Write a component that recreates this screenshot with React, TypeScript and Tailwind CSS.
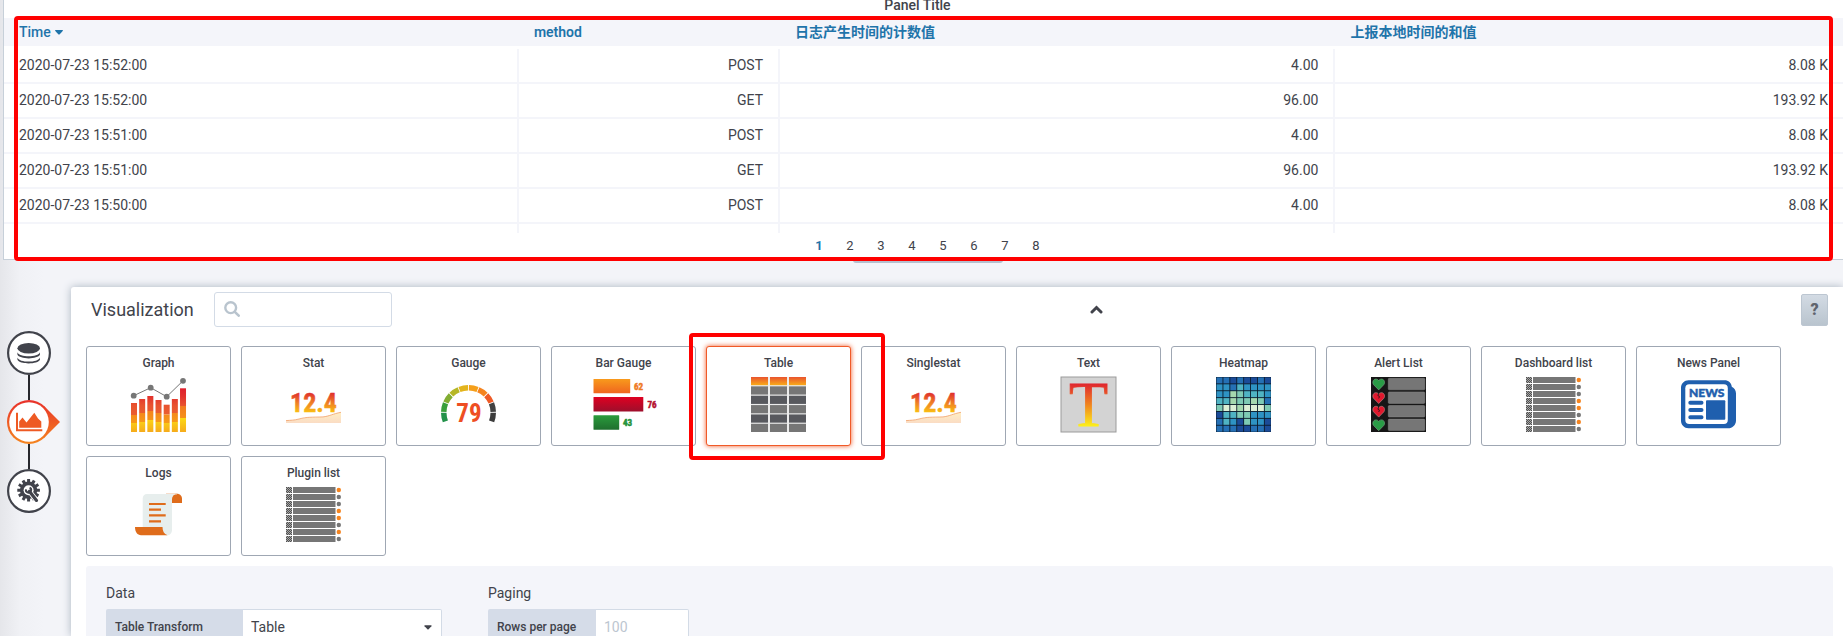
import React from 'react';

type Row = [string, string, string, string];

const rows: Row[] = [
  ['2020-07-23 15:52:00', 'POST', '4.00', '8.08 K'],
  ['2020-07-23 15:52:00', 'GET', '96.00', '193.92 K'],
  ['2020-07-23 15:51:00', 'POST', '4.00', '8.08 K'],
  ['2020-07-23 15:51:00', 'GET', '96.00', '193.92 K'],
  ['2020-07-23 15:50:00', 'POST', '4.00', '8.08 K'],
];

const NARROW = '"Liberation Sans Narrow", "Roboto Condensed", Roboto, sans-serif';

function Icon({ children }: { children: React.ReactNode }) {
  return (
    <svg viewBox="0 0 55 55" className="size-[55px] overflow-visible" aria-hidden="true">
      {children}
    </svg>
  );
}

const graphBars = [
  [26, 38, 46],
  [22, 36, 45],
  [19, 34, 43],
  [23, 36, 45],
  [27.7, 37.5, 46],
  [22, 36, 45],
  [11.3, 29, 41],
];

function GraphIcon() {
  return (
    <Icon>
      <defs>
        <linearGradient id="g-red" x1="0" y1="11" x2="0" y2="38" gradientUnits="userSpaceOnUse">
          <stop offset="0" stopColor="#df1f2d" />
          <stop offset="0.3" stopColor="#e2312d" />
          <stop offset="0.65" stopColor="#e8532f" />
          <stop offset="1" stopColor="#ea5f2f" />
        </linearGradient>
        <linearGradient id="g-orange" x1="0" y1="29" x2="0" y2="46" gradientUnits="userSpaceOnUse">
          <stop offset="0" stopColor="#f27b20" />
          <stop offset="1" stopColor="#f79a17" />
        </linearGradient>
        <linearGradient id="g-yellow" x1="0" y1="41" x2="0" y2="55" gradientUnits="userSpaceOnUse">
          <stop offset="0" stopColor="#fbd914" />
          <stop offset="1" stopColor="#f6ab1b" />
        </linearGradient>
      </defs>
      {graphBars.map(([a, b, c], i) => (
        <g key={i}>
          <rect x={i * 8.17} y={a} width="6" height={b - a} fill="url(#g-red)" />
          <rect x={i * 8.17} y={b} width="6" height={c - b} fill="url(#g-orange)" />
          <rect x={i * 8.17} y={c} width="6" height={55 - c} fill="url(#g-yellow)" />
        </g>
      ))}
      <path d="M2.7 18.7 19.7 10.7 35.7 19.7 52 3.8" fill="none" stroke="#767676" strokeWidth="1" />
      {[[2.7, 18.7], [19.7, 10.7], [35.7, 19.7], [52, 3.8]].map(([x, y]) => (
        <circle key={x} cx={x} cy={y} r="2.9" fill="#767676" />
      ))}
    </Icon>
  );
}

function StatIcon({ id }: { id: string }) {
  return (
    <Icon>
      <defs>
        <linearGradient id={id} x1="0" y1="16" x2="0" y2="36" gradientUnits="userSpaceOnUse">
          <stop offset="0" stopColor="#df2f2d" />
          <stop offset="0.5" stopColor="#ef7f25" />
          <stop offset="1" stopColor="#fbc410" />
        </linearGradient>
        <linearGradient id={id + 'a'} x1="0" y1="35" x2="0" y2="46" gradientUnits="userSpaceOnUse">
          <stop offset="0" stopColor="#fff0c4" />
          <stop offset="1" stopColor="#fadcc4" />
        </linearGradient>
      </defs>
      <path d="M0 43.6C5 43.2 8 43.3 13 42 21 39.8 26 40.3 37 39.9 43 39.3 47 36.8 55 35.3V46H0Z" fill={`url(#${id}a)`} />
      <path d="M0 43.6C5 43.2 8 43.3 13 42 21 39.8 26 40.3 37 39.9 43 39.3 47 36.8 55 35.3" fill="none" stroke="#f0a06a" strokeWidth="0.8" />
      <text x="27.5" y="35" textAnchor="middle" fontFamily={NARROW} fontWeight="700" fontSize="26" fill={`url(#${id})`} stroke={`url(#${id})`} strokeWidth="0.5">
        12.4
      </text>
    </Icon>
  );
}

const gaugeColors = ['#23924a', '#389f3a', '#82ad31', '#b6b726', '#e3b41c', '#f59f1a', '#f5841f', '#ee5a26', '#414141', '#3c3c3c'];

function GaugeIcon() {
  const point = (deg: number, r: number) => {
    const a = (deg * Math.PI) / 180;
    return `${27.5 + r * Math.cos(a)} ${35.5 - r * Math.sin(a)}`;
  };
  const step = 22.4;
  return (
    <Icon>
      {gaugeColors.map((color, i) => {
        const from = 202 - i * step - 1;
        const to = 202 - (i + 1) * step + 1;
        return (
          <path
            key={i}
            d={`M${point(from, 27.5)}A27.5 27.5 0 0 1 ${point(to, 27.5)}L${point(to, 22)}A22 22 0 0 0 ${point(from, 22)}Z`}
            fill={color}
          />
        );
      })}
      <text x="28" y="45" textAnchor="middle" fontFamily={NARROW} fontWeight="700" fontSize="25" fill="#ee4e22">
        79
      </text>
    </Icon>
  );
}

function BarGaugeIcon() {
  return (
    <Icon>
      <defs>
        <linearGradient id="b1" x1="0" y1="0" x2="0" y2="1">
          <stop offset="0" stopColor="#f89a1c" />
          <stop offset="1" stopColor="#f0651f" />
        </linearGradient>
        <linearGradient id="b2" x1="0" y1="0" x2="0" y2="1">
          <stop offset="0" stopColor="#df0021" />
          <stop offset="1" stopColor="#9d0f2c" />
        </linearGradient>
        <linearGradient id="b3" x1="0" y1="0" x2="0" y2="1">
          <stop offset="0" stopColor="#2a9c3c" />
          <stop offset="1" stopColor="#1f6f2e" />
        </linearGradient>
      </defs>
      <rect x="-2.5" y="2" width="36.7" height="14.3" rx="0.5" fill="url(#b1)" />
      <rect x="-2.5" y="20" width="49.8" height="14.6" rx="0.5" fill="url(#b2)" />
      <rect x="-2.5" y="38.2" width="25.7" height="14.6" rx="0.5" fill="url(#b3)" />
      <g fontFamily={NARROW} fontWeight="700" fontSize="9" strokeWidth="0.5">
        <text x="38" y="12.6" fill="#ef7a22" stroke="#ef7a22">62</text>
        <text x="51.4" y="30.6" fill="#b4102e" stroke="#b4102e">76</text>
        <text x="27" y="48.6" fill="#25933b" stroke="#25933b">43</text>
      </g>
    </Icon>
  );
}

function TableIcon() {
  const fills = ['url(#t-head)', '#767676', '#58595e', '#767676', '#58595e', '#767676'];
  return (
    <Icon>
      <defs>
        <linearGradient id="t-head" x1="0" y1="0" x2="0" y2="1">
          <stop offset="0" stopColor="#e9532e" />
          <stop offset="1" stopColor="#f9ab18" />
        </linearGradient>
      </defs>
      <rect width="55" height="55" fill="#ececec" />
      {fills.map((fill, r) =>
        [0, 19, 38].map((x) => <rect key={`${r}-${x}`} x={x} y={r * 9.36} width="17" height="8.2" fill={fill} />),
      )}
    </Icon>
  );
}

function TextIcon() {
  return (
    <Icon>
      <defs>
        <linearGradient id="txt" x1="0" y1="6" x2="0" y2="49" gradientUnits="userSpaceOnUse">
          <stop offset="0" stopColor="#df2330" />
          <stop offset="0.5" stopColor="#f0841f" />
          <stop offset="1" stopColor="#fdef1b" />
        </linearGradient>
      </defs>
      <rect x="0" y="0" width="55" height="55" fill="#d3d3d3" stroke="#9b9b9b" />
      <text x="27.5" y="48.6" textAnchor="middle" fontFamily='"Liberation Serif", serif' fontSize="64" fill="url(#txt)" stroke="url(#txt)" strokeWidth="0.8">
        T
      </text>
    </Icon>
  );
}

const heat = ['BBDBDDBD', 'LLBTLLLL', 'LLPGTTTL', 'TTPGGPGB', 'GYYPYYYG', 'DTTGGLLL', 'BTLDGLLD', 'BBBDDBBD'];
const heatColors: Record<string, string> = {
  D: '#1b4b98',
  B: '#2570b5',
  L: '#2e93c4',
  T: '#4fb3c3',
  G: '#7ecab4',
  P: '#a5d8ae',
  Y: '#dcefd5',
};

function HeatmapIcon() {
  return (
    <Icon>
      <rect width="55" height="55" fill="#0c1c2c" />
      {heat.map((line, y) =>
        line.split('').map((c, x) => (
          <rect key={`${x}-${y}`} x={x * 6.9 + 0.5} y={y * 6.9 + 0.4} width="6" height="6" fill={heatColors[c]} />
        )),
      )}
    </Icon>
  );
}

function AlertIcon() {
  return (
    <Icon>
      <rect width="55" height="55" fill="#161616" />
      {[0, 1, 2, 3].map((i) => {
        const y = i * 13.6;
        const broken = i === 1 || i === 2;
        return (
          <g key={i}>
            <rect x="17.3" y={y + 1.3} width="36.5" height="11.5" rx="1" fill="#767676" stroke="#8d8d8d" strokeWidth="0.5" />
            <path
              transform={`translate(1.7 ${y + 1.6})`}
              d="M6 11.3 1 6.2C-.6 4.4.1.7 3 .5 4.500.4 5.500 1.2 6 2.100 6.500 1.200 7.500.4 9 .5c2.900.2 3.600 3.900 2 5.700Z"
              fill={broken ? '#e0182d' : '#299c46'}
              stroke={broken ? '#b98080' : '#6fa07c'}
              strokeWidth="0.7"
            />
            {broken && <path d={`M7.7 ${y + 2.8}l-.8 2.200 1.600 1-.8 1.800`} fill="none" stroke="#161616" strokeWidth="0.8" />}
          </g>
        );
      })}
    </Icon>
  );
}

function ListIcon({ id }: { id: string }) {
  return (
    <Icon>
      <defs>
        <pattern id={id} width="2" height="2" patternUnits="userSpaceOnUse">
          <rect width="2" height="2" fill="#a5a5a5" />
          <rect width="1" height="1" fill="#505050" />
          <rect x="1" y="1" width="1" height="1" fill="#505050" />
        </pattern>
      </defs>
      {[1, 0, 0, 1, 1, 0, 1, 0].map((on, i) => (
        <g key={i}>
          <rect x="0" y={i * 7} width="6" height="6" fill={`url(#${id})`} />
          <rect x="7" y={i * 7} width="42.5" height="6" fill="#767676" />
          <circle cx="52.8" cy={i * 7 + 3} r="2.2" fill={on ? '#f5841f' : '#767676'} />
        </g>
      ))}
    </Icon>
  );
}

function NewsIcon() {
  return (
    <Icon>
      <path d="M7.5 3.3H43.5C47.5 3.3 50.3 6 50.8 9.7 53.5 11 55 13.5 55 16.5V43.5C55 48 51.5 51.3 47 51.3H7.5C3.4 51.3 0 48 0 43.8V10.8C0 6.6 3.4 3.3 7.5 3.3Z" fill="#1f5fae" />
      <rect x="4.3" y="7.3" width="42.5" height="39.8" rx="4" fill="#fff" />
      <text x="25.7" y="20" textAnchor="middle" fontFamily="Lato, sans-serif" fontWeight="900" fontSize="12" fill="#1f5fae" stroke="#1f5fae" strokeWidth="0.5">
        NEWS
      </text>
      <path d="M9.3 25.7H20.5M9.3 33H20.5M9.3 40.3H20.5" stroke="#1f5fae" strokeWidth="4" strokeLinecap="round" />
      <rect x="25" y="23.3" width="19.3" height="19.5" rx="1" fill="#1f5fae" />
    </Icon>
  );
}

function LogsIcon() {
  return (
    <Icon>
      <path d="M41 16V11.5C41 9 42.5 6.8 45.8 6.8S51 9 51 12V16Z" fill="#df6c1b" />
      <path d="M35 6.3H46V7.5H35Z" fill="#f3cdb3" />
      <path d="M16 7H45C42.5 7.5 41 9.5 41 12V43C41 46 39 48.3 36 48.3 33 48.3 31 46 31 43V40H11.7V11.5C11.7 9 13.5 7 16 7Z" fill="#e7eeed" />
      <path d="M4 40H31.5C31.5 44 33 47 36.5 48.2H10C6.5 48.2 4 45 4 40Z" fill="#df6c1b" />
      <path d="M18 17H34.7M18 22.7H30M18 28.4H34.7M18 34.3H30" stroke="#df6c1b" strokeWidth="2.2" />
    </Icon>
  );
}

const plugins: { name: string; icon: React.ReactNode }[] = [
  { name: 'Graph', icon: <GraphIcon /> },
  { name: 'Stat', icon: <StatIcon id="stat" /> },
  { name: 'Gauge', icon: <GaugeIcon /> },
  { name: 'Bar Gauge', icon: <BarGaugeIcon /> },
  { name: 'Table', icon: <TableIcon /> },
  { name: 'Singlestat', icon: <StatIcon id="single" /> },
  { name: 'Text', icon: <TextIcon /> },
  { name: 'Heatmap', icon: <HeatmapIcon /> },
  { name: 'Alert List', icon: <AlertIcon /> },
  { name: 'Dashboard list', icon: <ListIcon id="dash" /> },
  { name: 'News Panel', icon: <NewsIcon /> },
  { name: 'Logs', icon: <LogsIcon /> },
  { name: 'Plugin list', icon: <ListIcon id="plug" /> },
];

function TablePanel() {
  const th = 'h-[31px] border-b-[3px] border-white bg-[#f4f5fa] px-[15px] text-left font-semibold text-[#1f74aa]';
  const td = 'h-[35px] border-b-2 border-[#f4f5fa] px-[15px] pb-[2px] text-right';
  return (
    <section className="relative ml-[3px] border-b border-l border-[#c7d0d9] bg-white">
      <h2 className="h-[18px] overflow-hidden pr-[12px] text-center text-sm leading-[10px] font-medium">Panel Title</h2>
      <div className="h-[215px] overflow-hidden">
        <table className="w-full table-fixed border-separate border-spacing-0 text-sm">
          <thead>
            <tr>
              <th className={`${th} w-[28%]`}>
                <button className="flex items-center gap-1 font-medium">
                  Time
                  <svg viewBox="0 0 8 5" className="h-[5px] w-2" aria-hidden="true">
                    <path d="M.5 0H7.5Q8.2.3 7.7.9L4.5 4.4Q4 4.8 3.5 4.4L.3.9Q-.2.3.5 0Z" fill="#1f74aa" />
                  </svg>
                </button>
              </th>
              <th className={`${th} w-[14.2%]`}>method</th>
              <th className={`${th} w-[30.2%]`}>日志产生时间的计数值</th>
              <th className={th}>上报本地时间的和值</th>
            </tr>
          </thead>
          <tbody>
            {rows.map(([time, method, count, sum], i) => (
              <tr key={i}>
                <td className="h-[35px] border-r-2 border-b-2 border-[#f4f5fa] px-[15px] pb-[2px]">{time}</td>
                <td className={`${td} border-r-2`}>{method}</td>
                <td className={`${td} border-r-2`}>{count}</td>
                <td className={td}>{sum}</td>
              </tr>
            ))}
            <tr aria-hidden="true">
              <td className="h-[35px] border-r-2 border-[#f4f5fa]" />
              <td className="border-r-2 border-[#f4f5fa]" />
              <td className="border-r-2 border-[#f4f5fa]" />
              <td />
            </tr>
          </tbody>
        </table>
      </div>
      <nav aria-label="Pages" className="flex h-[26px] items-center justify-center pl-2 text-[13px]">
        {[1, 2, 3, 4, 5, 6, 7, 8].map((n) => (
          <a key={n} href="#" className={n === 1 ? 'w-[31px] text-center font-bold text-[#1f74aa]' : 'w-[31px] text-center'}>
            {n}
          </a>
        ))}
      </nav>
      <div className="absolute -bottom-1 left-1/2 ml-1 h-1 w-[150px] -translate-x-1/2 rounded-b-[3px] bg-[#b5c0cf]" />
      <div className="pointer-events-none absolute top-4 right-[10px] -bottom-[2px] left-[10px] rounded-[4px] border-4 border-[#ff0000]" />
    </section>
  );
}

function gearPath() {
  const pts: string[] = [];
  const teeth = 12;
  for (let i = 0; i < teeth; i++) {
    const c = (i / teeth) * 2 * Math.PI;
    for (const [da, r] of [[-0.18, 8.6], [-0.13, 11.4], [0.13, 11.4], [0.18, 8.6]]) {
      pts.push(`${(r * Math.sin(c + da)).toFixed(2)} ${(-r * Math.cos(c + da)).toFixed(2)}`);
    }
  }
  return `M${pts.join('L')}Z`;
}

function SideNav() {
  const line = 'ml-[21px] h-[25px] w-[2px] bg-[#26272c]';
  return (
    <nav aria-label="Editor sections" className="flex w-[71px] shrink-0 flex-col items-start pt-11 pl-[7px]">
      <button aria-label="Queries" className="size-11">
        <svg viewBox="-22 -22 44 44" className="size-11" aria-hidden="true">
          <circle r="20.9" fill="#fff" stroke="#41434b" strokeWidth="2.2" />
          <ellipse cx="-.3" cy="-4.8" rx="11.3" ry="5.3" fill="#41434b" />
          <path d="M-11.6-.8C-10 4.600 9.400 4.600 11-.8V1.600C9 6.700-9.600 6.700-11.6 1.600Z" fill="#41434b" />
          <path d="M-11.6 4.400C-10 10 9.400 10 11 4.400V6.600C9 11.800-9.600 11.800-11.6 6.600Z" fill="#41434b" />
        </svg>
      </button>
      <div className={line} />
      <button aria-label="Visualization" className="size-11">
        <svg viewBox="-22 -22 44 44" className="size-11 overflow-visible" aria-hidden="true">
          <defs>
            <linearGradient id="nav" x1="0" y1="-22" x2="0" y2="22" gradientUnits="userSpaceOnUse">
              <stop offset="0" stopColor="#e8302a" />
              <stop offset="0.5" stopColor="#ee5a24" />
              <stop offset="1" stopColor="#f5851f" />
            </linearGradient>
          </defs>
          <circle r="22" fill="url(#nav)" />
          <path d="M14.5-16.5 31 0 14.5 16.5Z" fill="url(#nav)" />
          <circle r="19.8" fill="#fff" />
          <path d="M-13-9.3H-11V7.3H13.3V9.2H-13Z" fill="#ee5a24" />
          <path d="M-9.8 5.8V-.5L-6.5-4.5-2.5.5 5.3-9.3 9-3.5 12.3-.5V5.8Z" fill="#ee5a24" />
        </svg>
      </button>
      <div className={line} />
      <button aria-label="General" className="size-11">
        <svg viewBox="-22 -22 44 44" className="size-11" aria-hidden="true">
          <circle r="20.9" fill="#fff" stroke="#41434b" strokeWidth="2.2" />
          <g transform="translate(-.4 -.8)">
            <path d={gearPath()} fill="#41434b" />
            <circle r="5" fill="#fff" />
            <path d="M1.5 2 8.5 11" stroke="#fff" strokeWidth="5" />
            <path d="M.8 1 7.900 10.200" stroke="#41434b" strokeWidth="3.200" strokeLinecap="round" />
            <path d="M-2.600-.8A2.600 2.600 0 1 0 1-2.600" fill="none" stroke="#41434b" strokeWidth="2" />
          </g>
        </svg>
      </button>
    </nav>
  );
}

function PluginCard({ name, icon }: { name: string; icon: React.ReactNode }) {
  const selected = name === 'Table';
  return (
    <li className="relative w-[145px]">
      <button
        className={
          selected
            ? 'flex h-[100px] w-full flex-col items-center justify-between rounded-[3px] border border-[#f05a28] bg-white pt-2 pb-[13px] shadow-[0_0_5px_#f05a28]'
            : 'flex h-[100px] w-full flex-col items-center justify-between rounded-[3px] border border-[#9fa7b3] bg-white pt-2 pb-[13px]'
        }
      >
        <span className="text-xs font-medium">{name}</span>
        {icon}
      </button>
      {selected && (
        <div className="pointer-events-none absolute -top-[13px] -right-[34px] -bottom-[14px] -left-[17px] z-10 rounded-[4px] border-4 border-[#ff0000]" />
      )}
    </li>
  );
}

function Visualization() {
  return (
    <main className="min-w-0 flex-1 rounded-tl-[3px] bg-white pl-[15px] shadow-[0_0_8px_#a9b4c0]">
      <header className="flex h-[45px] items-center pr-[15px] pl-[5px]">
        <h1 className="w-[123px] text-lg">Visualization</h1>
        <div className="relative w-[178px]">
          <svg viewBox="0 0 16 16" className="absolute top-[9px] left-[10px] size-4" aria-hidden="true">
            <circle cx="6.7" cy="6.7" r="5.4" fill="none" stroke="#b9c4ce" strokeWidth="2.4" />
            <path d="M10.8 10.8 14.7 14.7" stroke="#b9c4ce" strokeWidth="2.6" strokeLinecap="round" />
          </svg>
          <input aria-label="Search visualizations" className="block h-[35px] w-full rounded-[3px] border border-[#d3dbe6] pr-2 pl-8 text-sm outline-none" />
        </div>
        <div className="flex flex-1 justify-center">
          <button aria-label="Collapse" className="p-2">
            <svg viewBox="0 0 13 9" className="h-[9px] w-[13px]" aria-hidden="true">
              <path d="M2 7 6.5 2.5 11 7" fill="none" stroke="#41434b" strokeWidth="3" strokeLinecap="round" />
            </svg>
          </button>
        </div>
        <button aria-label="Help" className="h-8 w-[27px] rounded-[2px] border border-[#bcc6d1] bg-linear-to-b from-[#d3dbe4] to-[#b9c4ce] text-base font-black text-[#5f646d]">
          ?
        </button>
      </header>
      <ul className="mt-[14px] flex flex-wrap gap-[10px]">
        {plugins.map((p) => (
          <PluginCard key={p.name} name={p.name} icon={p.icon} />
        ))}
      </ul>
      <form className="mt-[10px] mr-[10px] flex h-full gap-[46px] rounded-[3px] bg-[#f4f5fa] px-5 pt-4">
        <fieldset>
          <legend className="h-[27px] text-sm leading-[22px]">Data</legend>
          <div className="flex h-[35px]">
            <label htmlFor="transform" className="flex w-[137px] items-center rounded-l-[2px] bg-[#d5dce8] px-[9px] text-xs font-medium">
              Table Transform
            </label>
            <div className="relative w-[199px]">
              <select id="transform" className="h-full w-full appearance-none rounded-r-[2px] border border-l-0 border-[#d3dbe6] bg-white px-2 text-sm">
                <option>Table</option>
              </select>
              <svg viewBox="0 0 8 5" className="pointer-events-none absolute top-4 right-[10px] h-[5px] w-2" aria-hidden="true">
                <path d="M.8.3H7.2Q7.9.5 7.4 1.2L4.6 4.2Q4 4.7 3.4 4.2L.6 1.2Q.1.5.8.3Z" fill="#41434b" />
              </svg>
            </div>
          </div>
        </fieldset>
        <fieldset>
          <legend className="h-[27px] text-sm leading-[22px]">Paging</legend>
          <div className="flex h-[35px]">
            <label htmlFor="perpage" className="flex w-[108px] items-center rounded-l-[2px] bg-[#d5dce8] px-[9px] text-xs font-medium">
              Rows per page
            </label>
            <input id="perpage" placeholder="100" className="w-[93px] rounded-r-[2px] border border-l-0 border-[#d3dbe6] bg-white px-2 text-sm outline-none placeholder:text-[#bcc6d0]" />
          </div>
        </fieldset>
      </form>
    </main>
  );
}

export default function App() {
  return (
    <div className='flex h-screen flex-col overflow-hidden bg-[#f3f4f8] bg-[linear-gradient(90deg,#e5e6ea_0,#f0f1f5_20px,#f3f4f8_44px)] font-[Roboto,"Noto_Sans_CJK_SC",sans-serif] text-[#41434b]'>
      <TablePanel />
      <div className="mt-[27px] flex min-h-0 flex-1">
        <SideNav />
        <Visualization />
      </div>
    </div>
  );
}
